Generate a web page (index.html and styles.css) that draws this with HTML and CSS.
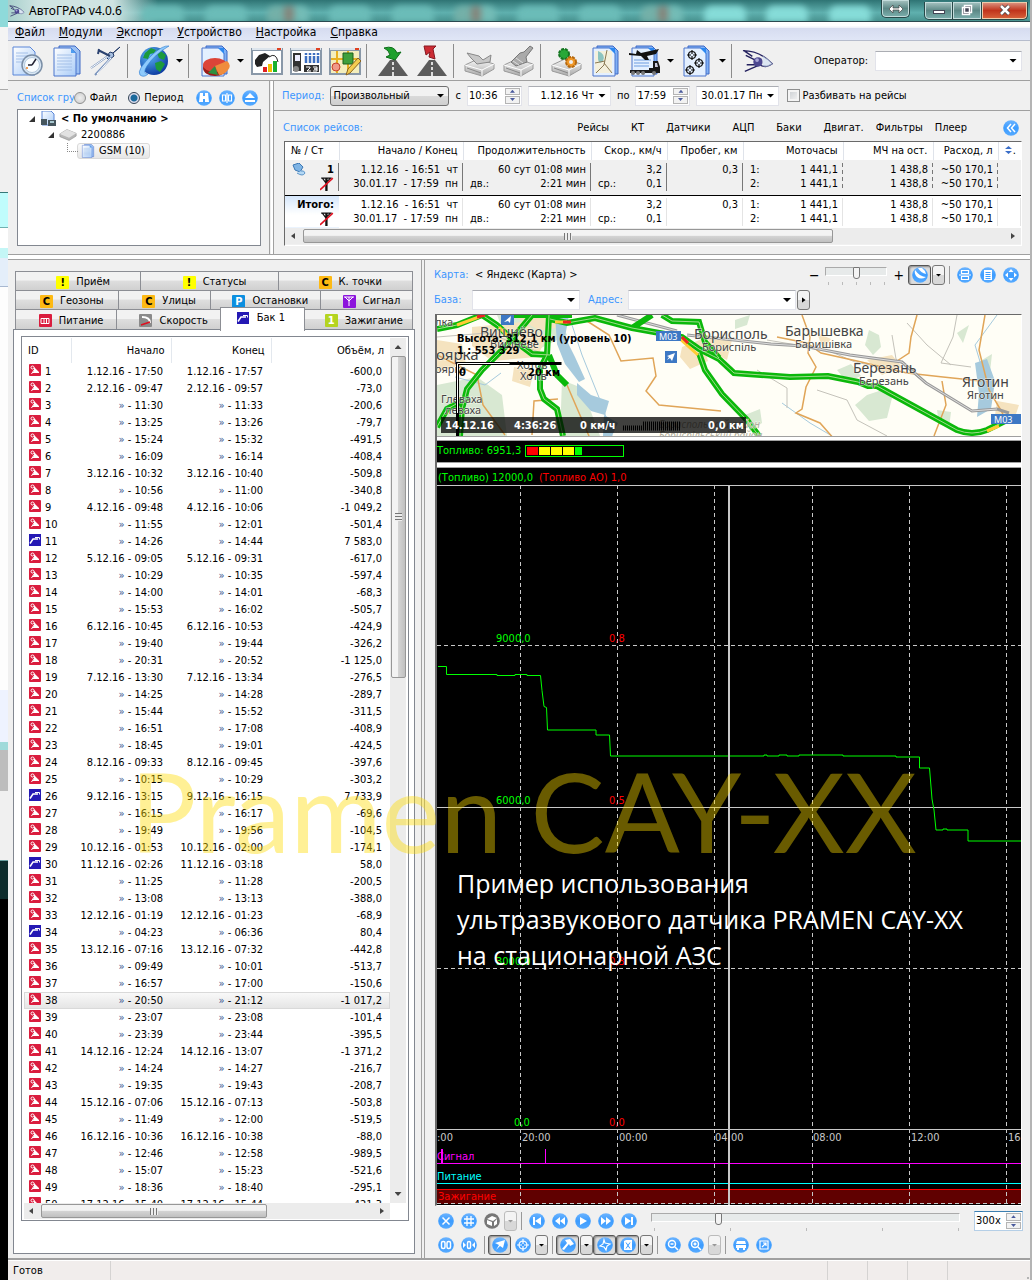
FILE: index.html
```html
<!DOCTYPE html>
<html lang="ru">
<head>
<meta charset="utf-8">
<title>АвтоГРАФ v4.0.6</title>
<link rel="stylesheet" href="styles.css">
</head>
<body>
<svg class="defs" aria-hidden="true">
  <defs>
    <linearGradient id="blue" x1="0" y1="0" x2="0" y2="1"><stop offset="0" stop-color="#6cb4ff"/><stop offset=".5" stop-color="#3c9cff"/><stop offset="1" stop-color="#56aaff"/></linearGradient>
    <linearGradient id="paper" x1="0" y1="0" x2="1" y2="1"><stop offset="0" stop-color="#fff"/><stop offset="1" stop-color="#a9ccf8"/></linearGradient>
    <radialGradient id="earth" cx=".35" cy=".3" r=".8"><stop offset="0" stop-color="#5ab4f4"/><stop offset="1" stop-color="#06319a"/></radialGradient>
    <linearGradient id="metal" x1="0" y1="0" x2="0" y2="1"><stop offset="0" stop-color="#fafafa"/><stop offset="1" stop-color="#a8a8a8"/></linearGradient>
    <symbol id="sheets" viewBox="0 0 32 32"><path d="M8 1h16l5 5v23H8z" fill="#9cc0f2" stroke="#3f68c4"/><path d="M3 3h17l5 5v23H3z" fill="url(#paper)" stroke="#4a74cc"/><path d="M20 3l5 5h-5z" fill="#4f9df0"/><path d="M6 10h15M6 13h15M6 16h15M6 19h15M6 22h15M6 25h15" stroke="#a4c0e8"/></symbol>
    <symbol id="chart-page" viewBox="0 0 32 32"><path d="M7 1h16l5 5v23H7z" fill="#7fb0f4" stroke="#3f68c4"/><path d="M3 3h17l5 5v23H3z" fill="#e4f0ff" stroke="#4a74cc"/><path d="M19 3l6 6v-6z" fill="#2d88f0"/></symbol>
    <symbol id="device" viewBox="0 0 32 32"><path d="M1 20l13-6 16 5v5l-12 7-17-5z" fill="url(#metal)" stroke="#9a9a9a"/><path d="M1 20l17 5 12-6M18 25v6" fill="none" stroke="#fff"/><path d="M3 23l14 5" stroke="#888"/></symbol>
    <symbol id="road" viewBox="0 0 32 32"><path d="M13 15h6l12 16H1z" fill="#5c5c5c"/><path d="M16 17v3M16 22v3M16 27v4" stroke="#ddd" stroke-width="2"/></symbol>
    <symbol id="logo" viewBox="0 0 34 26"><path d="M1 2q18 0 31 14-6 5-13 1M4 7l14 7M5 17h12M3 24l14-6M2 2l9 6" fill="none" stroke="#23205e" stroke-width="1.5"/><circle cx="17" cy="14" r="5" fill="#4c4790"/><circle cx="16" cy="12" r="2" fill="#a9a6d8"/><path d="M22 8q7 4 10 8-6 4-10 2" fill="#dce6f2" stroke="#8f9cc0"/></symbol>
    <symbol id="leak" viewBox="0 0 12 12"><rect width="12" height="12" rx="1" fill="#da1d3e"/><circle cx="3.5" cy="3.500" r="1.500" fill="none" stroke="#fff"/><path d="M5 5V3l5 5v1H3l2-2z" fill="#fff"/><path d="M2.500 10L5 6" stroke="#fff"/></symbol>
    <symbol id="fill" viewBox="0 0 12 12"><rect width="12" height="12" fill="#2519b4"/><path d="M1 9.500l3-4.500h5" fill="none" stroke="#fff" stroke-width="1.500"/><path d="M6 3.500h4.500v2" fill="none" stroke="#fff"/></symbol>
    <symbol id="antenna" viewBox="0 0 12 12"><path d="M1 1h9M2 1l3 4 4-4M5 1v11M6 1v11" fill="none" stroke="#111"/><path d="M0 11L11 1" stroke="#e01020" stroke-width="1.300"/></symbol>
  </defs>
</svg>

<div class="desktop">
<div class="behind"></div>
<div class="window">
  <header class="title">
    <svg class="title-logo" viewBox="0 0 34 26"><use href="#logo"/></svg>
    <h1>АвтоГРАФ v4.0.6</h1>
    <div class="glass"><i></i><i></i><i></i><i></i><i></i><i></i><i></i><i></i><i></i><i></i><i></i><i></i></div>
    <button class="cap" aria-label="Перенести"><svg viewBox="0 0 16 10" width="16" height="10"><path d="M1 5l4-4v3h6V1l4 4-4 4V6H5v3z" fill="#fff" stroke="#444" stroke-width=".7"/></svg></button>
    <div class="caps"><button class="cap" aria-label="Свернуть"><svg viewBox="0 0 12 12" width="12" height="12"><rect x=".5" y="6.500" width="11" height="3" fill="#fff" stroke="#445"/></svg></button><button class="cap" aria-label="Развернуть"><svg viewBox="0 0 12 12" width="12" height="12"><path d="M3.500 1.500h7v7h-7zM1.500 3.500h7v7h-7z" fill="#445" stroke="#fff" stroke-width="1.500"/></svg></button><button class="cap close" aria-label="Закрыть"><svg viewBox="0 0 12 12" width="12" height="12"><path d="M2 2l8 8M10 2l-8 8" stroke="#444" stroke-width="4"/><path d="M2 2l8 8M10 2l-8 8" stroke="#fff" stroke-width="2.500"/></svg></button></div>
  </header>

  <nav class="menu">
    <a href="#"><u>Ф</u>айл</a><a href="#"><u>М</u>одули</a><a href="#"><u>Э</u>кспорт</a><a href="#"><u>У</u>стройство</a><a href="#"><u>Н</u>астройка</a><a href="#"><u>С</u>правка</a>
  </nav>

  <div class="toolbar">
    <button aria-label="Отчёт за период"><svg viewBox="0 0 32 32"><path d="M1 2h17l5 5v23H1z" fill="url(#paper)" stroke="#5a86d8"/><path d="M4 8h12M4 11h14M4 14h10M4 17h8" stroke="#a4c0e8"/><circle cx="20" cy="20" r="10" fill="#d8e6f4" stroke="#7a8ea6" stroke-width="1.500"/><circle cx="20" cy="20" r="7.500" fill="#f8fcff" stroke="#b4c8dc"/><path d="M20 20l4-6M20 20h-4" stroke="#223" stroke-width="1.500"/><circle cx="15" cy="23" r="1" fill="#f08020"/></svg></button>
    <button aria-label="Отчёты"><svg><use href="#sheets"/></svg></button>
    <button aria-label="Измерение"><svg viewBox="0 0 32 32"><path d="M30 2l-7 6-3-1-4 5 3 3 5-4-1-3z" fill="#a8c0e0" stroke="#223a68"/><path d="M18 11L1 23M21 13L5 30" stroke="#7892bc" stroke-width="2"/><path d="M18 11L1 23M21 13L7 29" stroke="#fff"/><path d="M8 5l12 6M9 4l-1 5" stroke="#2b4270" stroke-width="2"/></svg></button>
    <span class="sep"></span>
    <button aria-label="Карта"><svg viewBox="0 0 32 32"><circle cx="16" cy="16" r="14" fill="url(#earth)"/><path d="M7 8l6-5 5 2-2 3-4 1-2 5-5-1zM20 4l8 6-2 5-5-2-2-5zM17 18l6-2 4 3-5 8-4-3z" fill="#1c9a3c"/><path d="M31 1q-6-1-16 8Q-2 25 2 30q4 3 8-1Q4 29 9 21 17 9 31 1" fill="#8ecafc" stroke="#2b7ad0" stroke-width=".6"/></svg></button><button class="drop" aria-label="Ещё"></button>
    <span class="sep"></span>
    <button aria-label="Диаграммы"><svg viewBox="0 0 32 32"><use href="#chart-page"/><ellipse cx="16" cy="23" rx="12" ry="8" fill="#9a1c18"/><ellipse cx="16" cy="20" rx="12" ry="7" fill="#dc4438"/><path d="M16 21l12-5q5 4 1 9-4 5-9 5z" fill="#f08c3c"/><path d="M16 21l3 9-10-2z" fill="#2e9040"/></svg></button><button class="drop" aria-label="Ещё"></button>
    <button aria-label="Топливо"><svg viewBox="0 0 32 32"><path d="M0 3h32v27H0z" fill="#8998a8"/><path d="M2 6h28v22H2z" fill="#fff"/><path d="M1 4h30" stroke="#dce4ec" stroke-width="2"/><path d="M26 4h4" stroke="#e04020" stroke-width="2"/><path d="M4 15l4-5 6-2 5 3-7 6-1 4-5 1-2-3z" fill="#222"/><path d="M18 12q7-5 9 5" fill="none" stroke="#222"/><path d="M12 22h4v5h-4z" fill="#e02020"/><path d="M17 19h4v8h-4z" fill="#f0c000"/><path d="M22 16h4v11h-4z" fill="#18b030"/></svg></button>
    <button aria-label="Пассажиры"><svg viewBox="0 0 32 32"><path d="M0 3h32v27H0z" fill="#8998a8"/><path d="M2 6h28v22H2z" fill="#fff"/><path d="M1 4h30" stroke="#dce4ec" stroke-width="2"/><path d="M26 4h4" stroke="#e04020" stroke-width="2"/><path d="M3 8h8v18H3z" fill="#333"/><path d="M5 10h5v6H5z" fill="#eef"/><circle cx="6" cy="24" r="3" fill="#888"/><path d="M16 8v10M20 8v10M24 8v10M28 8v10" stroke="#3d6fc0" stroke-width="2.500" stroke-dasharray="2 1 7"/><path d="M14 20h15v7H14z" fill="#333"/><path d="M16 22h4v1l-3 3h4M23 22h4v2h-3 3v2h-4" fill="none" stroke="#fff"/></svg></button>
    <button aria-label="Редактор зон"><svg viewBox="0 0 32 32"><path d="M0 3h32v27H0z" fill="#8998a8"/><path d="M2 6h28v22H2z" fill="#f4eebc"/><path d="M1 4h30" stroke="#dce4ec" stroke-width="2"/><path d="M26 4h4" stroke="#e04020" stroke-width="2"/><path d="M8 6v22M2 14h28M19 6v22" stroke="#e8b020" stroke-width="2"/><path d="M14 8h10v11H14z" fill="#3fa03c" stroke="#1d601c"/><circle cx="7" cy="22" r="4" fill="#f09a88" stroke="#c8402c"/><path d="M17 30l2-6L29 13l3 3-11 12z" fill="#f4cc50" stroke="#8a6420"/></svg></button>
    <span class="sep"></span>
    <button aria-label="Загрузить данные"><svg viewBox="0 0 32 32"><use href="#road"/><path d="M7 3q10-3 13 5l4-1-6 8-9-3 4-2Q12 5 7 3z" fill="#1da02c" stroke="#0c6c18"/></svg></button>
    <button aria-label="Выгрузить данные"><svg viewBox="0 0 32 32"><use href="#road"/><path d="M8 1h12l-3 3 2 10-6-2 1-5-4 3z" fill="#cc2c34" stroke="#861820"/></svg></button>
    <span class="sep"></span>
    <button aria-label="Чтение прибора"><svg viewBox="0 0 32 32"><use href="#device"/><path d="M3 8l12 3 4 4 8-5-1 7-13 2-6-6z" fill="#c8c8c8" stroke="#888"/></svg></button>
    <button aria-label="Очистка прибора"><svg viewBox="0 0 32 32"><use href="#device"/><path d="M27 1l3 2-7 9 1 5-11 4-5-4 9-9 4-1z" fill="#aaa" stroke="#777"/><path d="M13 13l7 5M10 16l6 4" stroke="#ddd"/></svg></button>
    <span class="sep"></span>
    <button aria-label="Настройка прибора"><svg viewBox="0 0 32 32"><use href="#device"/><circle cx="13" cy="9" r="5" fill="#28a838" stroke="#147420" stroke-width="2" stroke-dasharray="3 1"/><circle cx="20" cy="17" r="5" fill="#f09828" stroke="#b46810" stroke-width="2" stroke-dasharray="3 1"/><circle cx="20" cy="17" r="2" fill="#eee"/></svg></button>
    <button aria-label="Отчёт с картой"><svg viewBox="0 0 32 32"><use href="#chart-page"/><path d="M5 6h17v22H5z" fill="#f4f0dc"/><path d="M8 6q8 3 5 10-4 4-5-2z" fill="#8cc4c0"/><path d="M17 5l-3 15-8 8M14 18l8 10M5 18l10-2" fill="none" stroke="#8a7a54"/></svg></button>
    <button aria-label="Отчёт по технике"><svg viewBox="0 0 32 32"><use href="#chart-page"/><path d="M5 15h17M5 18h15M5 21h15" stroke="#6c9ce0"/><path d="M0 8l7 1 1-4 4 3 18-4-3 5-9 2 2 4h-4l-4-4-12-1z" fill="#111"/><path d="M1 25h19v-2h4v-7h5l2 6v6H1z" fill="#181818"/><path d="M26 18h2l1 4h-3z" fill="#ccd"/><path d="M4 28h.1M9 28h.1M14 28h.1M25 28h.1" stroke="#777" stroke-width="4" stroke-linecap="round"/></svg></button><button class="drop" aria-label="Ещё"></button>
    <button aria-label="Отчёт по точкам"><svg viewBox="0 0 32 32"><use href="#chart-page"/><g fill="none" stroke="#111" stroke-width="1.200"><circle cx="11" cy="10" r="3.500"/><path d="M11 5v4M11 11v4M6 10h4M12 10h4"/><circle cx="18" cy="18" r="3.500"/><path d="M18 13v4M18 19v4M13 18h4M19 18h4"/><circle cx="9" cy="25" r="3.500"/><path d="M9 20v4M9 26v4M4 25h4M10 25h4"/></g></svg></button><button class="drop" aria-label="Ещё"></button>
    <span class="sep"></span>
    <button class="wide" aria-label="О программе"><svg><use href="#logo"/></svg></button>
    <label class="operator">Оператор: <span class="combo"><select><option></option></select></span></label>
  </div>

  <div class="top">
    <section class="groups">
      <div class="groups-head">
        <span class="cap-blue">Список групп</span>
        <label><input type="radio" name="src"> Файл</label>
        <label class="r2"><input type="radio" name="src" checked> Период</label>
        <button class="ic" data-i="find" aria-label="Найти"></button><button class="ic" data-i="cols" aria-label="Столбцы"></button><button class="ic" data-i="eject" aria-label="Свернуть список"></button>
      </div>
      <ul class="tree">
        <li><span class="exp"></span><svg width="17" height="16" viewBox="0 0 17 16"><path d="M2 0h9l3 3v11H2z" fill="url(#paper)" stroke="#5a86d8"/><path d="M1 8h6v6H1zM8 9h8v6H8z" fill="#46565e"/><path d="M10 10h4v2h-4z" fill="#a8c8d0"/></svg><b>&lt; По умолчанию &gt;</b></li>
        <li class="l2"><span class="exp"></span><svg width="18" height="12" viewBox="0 0 32 22"><path d="M1 9l13-8 17 7v5l-13 8L1 14z" fill="#b8b8b8" stroke="#8a8a8a"/><path d="M1 9l13-8 17 7-13 8z" fill="#e2e2e2"/></svg><span>2200886</span></li>
        <li class="l3"><span class="sel"><svg width="14" height="14"><use href="#sheets"/></svg><span>GSM (10)</span></span></li>
      </ul>
    </section>
    <section class="trips">
      <div class="period">
        <span class="cap-blue">Период:</span>
        <span class="combo raised w119"><select aria-label="Период"><option>Произвольный</option></select></span>
        <span>с</span>
        <span class="spin"><input type="text" value="10:36" aria-label="Время начала"><span><button aria-label="Больше"></button><button aria-label="Меньше"></button></span></span>
        <span class="combo w83"><select aria-label="Дата начала"><option>1.12.16 Чт</option></select></span>
        <span>по</span>
        <span class="spin"><input type="text" value="17:59" aria-label="Время конца"><span><button aria-label="Больше"></button><button aria-label="Меньше"></button></span></span>
        <span class="combo w83"><select aria-label="Дата конца"><option>30.01.17 Пн</option></select></span>
        <label class="split"><input type="checkbox"> Разбивать на рейсы</label>
      </div>
      <div class="trips-head">
        <span class="cap-blue">Список рейсов:</span>
        <nav><a href="#">Рейсы</a><a href="#">КТ</a><a href="#">Датчики</a><a href="#">АЦП</a><a href="#">Баки</a><a href="#">Двигат.</a><a href="#">Фильтры</a><a href="#">Плеер</a></nav>
        <button class="ic" data-i="left" aria-label="Свернуть"></button>
      </div>
      <div class="trip-box">
        <table class="trip-table">
          <colgroup><col class="c54"><col class="c124"><col class="c128"><col class="c76"><col class="c76"><col class="c100"><col class="c90"><col class="c65"><col></colgroup>
          <thead><tr><th>№ / Ст</th><th>Начало / Конец</th><th>Продолжительность</th><th>Скор., км/ч</th><th>Пробег, км</th><th>Моточасы</th><th>МЧ на ост.</th><th>Расход, л</th><th class="last"><svg width="7" height="8" viewBox="0 0 7 8"><path d="M0 3l3.500-3L7 3zM0 5l3.500 3L7 5z" fill="#3b6ec8"/></svg><span>.</span></th></tr></thead>
          <tbody></tbody>
        </table>
        <div class="hbar"><i class="al"></i><span class="thumb"></span><i class="ar"></i></div>
      </div>
    </section>
  </div>

  <div class="main">
    <section class="left">
      <div class="tabs">
        <div><button class="g125"><i class="y">!</i>Приём</button><button class="g138"><i class="y">!</i>Статусы</button><button class="g135"><i class="o">C</i>К. точки</button></div>
        <div><button class="g103"><i class="o">C</i>Геозоны</button><button class="g91"><i class="o">C</i>Улицы</button><button class="g112"><i class="p">P</i>Остановки</button><button class="g91"><i class="v"><svg viewBox="0 0 12 12"><path d="M1 2h10M2 2l4 4 4-4M6 2v9" fill="none" stroke="#fff"/></svg></i>Сигнал</button></div>
        <div><button class="g100"><i class="r"><svg viewBox="0 0 12 12"><path d="M2 3.500h8v5H2zM5 3v6M7.500 3v6" fill="none" stroke="#fff"/></svg></i>Питание</button><button class="g103"><i class="s"><svg viewBox="0 0 12 12"><path d="M2 2q8 0 8 6" fill="none" stroke="#fff" stroke-width="2"/><path d="M1 10l9-3" stroke="#e01020" stroke-width="1.500"/></svg></i>Скорость</button><button class="g88 on"><i><svg><use href="#fill"/></svg></i>Бак 1</button><button class="g107"><i class="n">1</i>Зажигание</button></div>
      </div>
      <div class="panel">
        <div class="list">
          <div class="list-body">
            <div class="rows">
              <table class="tank">
                <colgroup><col class="c47"><col class="c100"><col class="c100"><col></colgroup>
                <thead><tr><th>ID</th><th>Начало</th><th>Конец</th><th>Объём, л</th></tr></thead>
                <tbody></tbody>
              </table>
            </div>
            <div class="vbar"><i class="au"></i><span class="thumb"></span><i class="ad"></i></div>
          </div>
          <div class="hbar"><i class="al"></i><span class="thumb"></span><i class="ar"></i></div>
        </div>
      </div>
    </section>

    <section class="right">
      <div class="map-bar">
        <span class="cap-blue">Карта:</span><span>&lt; Яндекс (Карта) &gt;</span>
        <span class="zoomer">−<span class="slide"><input type="range" aria-label="Масштаб карты"></span>+</span>
        <button class="ic press" data-i="earth" aria-label="Слой"></button><button class="dd" aria-label="Ещё"></button><span class="vsep"></span>
        <button class="ic" data-i="fit" aria-label="Вписать"></button><button class="ic" data-i="page" aria-label="Журнал"></button><button class="ic" data-i="move" aria-label="На весь экран"></button>
      </div>
      <div class="map-bar second">
        <label class="cap-blue" for="base">База:</label><span class="combo w108"><select id="base"><option></option></select></span>
        <label class="cap-blue adr" for="adr">Адрес:</label><span class="combo w168"><select id="adr"><option></option></select></span><button class="dd go" aria-label="Найти"></button>
      </div>
      <div class="screen">
        <svg class="map" viewBox="0 0 584 121" preserveAspectRatio="xMinYMin slice">
          <rect width="584" height="121" fill="#fffef6"/>
          <g fill="#d8e8d2"><path d="M0 70l40-8 25 18 5 41H0zM60 0h60l10 20-30 15-30-10zM125 65l20 8 18 48h-40zM298 5l15-5-3 10-12 4zM432 15l10 5 2 12-8 8-8-10zM430 80l15-5 10 8-5 20-18 3-14-16zM520 18l12-8-6 18zM400 55l14-6 10 12-14 6zM545 45l10-6-2 18zM308 100l15-6 2 14-12 8zM500 95l14 2-2 16-10-4z"/></g>
          <g fill="#f5e3bf"><path d="M35 12l50-5 25 15-10 20-45 4-20-15zM0 25l25 4 4 20-29 8zM75 0h50l8 10-30 6zM245 32l20-8 6 22-18 8-10-12zM270 22l25 3-5 20-12-6zM430 45l25-5 10 12-20 8zM380 18l14 6-8 10zM560 86l22 4-4 12-20-2zM77 52l20 4-4 16-18-6z"/></g>
          <g fill="#a6cadd"><path d="M118 0l14 0-4 22 10 20 10 22-6 3-14-18-8-20zM140 68l14 12 18 6-4 14-14-4-14-16zM167 100l14 8-6 13h-9zM538 48l12-4 8 22-4 28-14 8 2-24z"/></g>
          <g fill="none" stroke="#a6cadd"><path d="M135 10l10 30 20 50 10 31M18 62l30 8 16-12M345 88l28 20 22 13M560 0l-22 30 6 20"/></g>
          <g fill="none" stroke="#c4c2ba"><path d="M0 22l50-4 60 22M330 25l60 10 28 12 40 8M320 55l30 18 0 20M470 8l20 22 24 20M520 0l-4 22-12 26 30 4M380 75l30 10 10 20 30 16M455 20l4 24 24 20"/></g>
          <g fill="none" stroke="#e0a558" stroke-width="1.500"><path d="M150 6l22 14 12 26 32-3 3 18-10 15 13 14 62 6M0 40l40 20 6 30 22 30M130 70l22 51M95 120l2-34 24-2M365 0l8 22-2 16 8 14-10 20-4 22-6 4 24 10 15 17M480 0l-6 22-2 16-12 8M340 22l30 6 14 10 36 8 50 12 36 4 38 4M505 66l4 24-12 31M548 0l-6 35 10 40 14 24"/></g>
          <g fill="none" stroke="#999" stroke-width="3"><path d="M180 0l60 16M250 20l84 9 32 2 47 9 52 7 24 21 46 28 25-2 12 4"/></g>
          <path d="M180 0l60 16M250 20l84 9 32 2 47 9 52 7 24 21 46 28 25-2" fill="none" stroke="#ddd"/>
          <path d="M0 14l20-4L45 0M45 0l15 10 15 14 20 15 18 1M113 4l17 4 28-5 37 10 50 9 17 12 20 10 15 14 56 4 38-1 30 6 10 4 9 0 80 44q15 6 30 0l24-12M262 38l6 17 17 24 25 26 12 16M225 0l10 6 27 1 6 20 14 16M215 0l-20 13M112 0l-2 40-7 14v20l4 10 13 10 6 27M95 0L70 30 45 55 30 74l-5 20-2 27M0 112l10-18 22-12M112 40l8 20 10 10M75 0l60 0" fill="none" stroke="#0bb80b" stroke-width="6"/>
          <path d="M0 14l20-4L45 0M45 0l15 10 15 14 20 15 18 1M113 4l17 4 28-5 37 10 50 9 17 12 20 10 15 14 56 4 38-1 30 6 10 4 9 0 80 44q15 6 30 0l24-12M262 38l6 17 17 24 25 26 12 16M225 0l10 6 27 1 6 20 14 16M112 0l-2 40-7 14v20l4 10 13 10 6 27M95 0L70 30 45 55 30 74l-5 20-2 27M0 112l10-18 22-12" fill="none" stroke="#9fdc8c"/>
          <path d="M20 10l22-8M118 7h12M243 24l18 16M62 12l8 8M550 116l12-5" stroke="#fc3" stroke-width="3"/><path d="M40 2l8-2M126 7h8M245 22l6 6" stroke="#e22" stroke-width="3"/>
          <g fill="#3d78c4"><rect x="64" y="0" width="13" height="10"/><rect x="228" y="36" width="12" height="12"/><rect x="219" y="16" width="25" height="10"/><rect x="554" y="99" width="30" height="10"/></g>
          <g fill="#fff"><path d="M67 7l7-6-1 7-2-2zM230 41l8-3-3 8-2-3-3 2 2-3z"/></g>
          <g class="place"><text x="222" y="25" class="m">М03</text><text x="557" y="108" class="m">М03</text>
          <text x="43" y="22" class="big">Вишнёво</text><text x="53" y="33">Вишневе</text><text x="-1" y="45" class="mid">оярка</text><text x="-2" y="58">оярка</text><text x="80" y="54">Хотов</text><text x="83" y="65">Хотів</text><text x="4" y="88">Глеваха</text><text x="8" y="99">леваха</text><text x="-2" y="11">лка</text>
          <text x="257" y="24" class="big">Борисполь</text><text x="265" y="36">Бориспіль</text><text x="348" y="21" class="big">Барышевка</text><text x="358" y="33">Баришівка</text><text x="416" y="58" class="big">Березань</text><text x="422" y="70">Березань</text><text x="525" y="72" class="big">Яготин</text><text x="530" y="84">Яготин</text>
          <text x="222" y="113" class="dim">Бориспольский район</text><text x="222" y="124" class="dim">Бориспільський район</text></g>
          <path d="M20.500 121V48.500h104" fill="none" stroke="#000" stroke-width="3"/><path d="M20.500 98V48.500h52" fill="none" stroke="#fff"/>
          <g class="hud"><text x="20" y="27">Высота: 312,1 км (уровень 10)</text><text x="20" y="39">1 : 553 329</text><text x="22" y="61">0</text><text x="91" y="61">20 км</text></g>
          <rect x="4" y="102" width="305" height="16" fill="#000" fill-opacity=".75"/>
          <path d="M186 113h58" stroke="#000" stroke-width="5" stroke-dasharray="1 1"/><path d="M206 110h38" stroke="#000" stroke-width="7" stroke-dasharray="1 1"/>
          <g class="hud w"><text x="8" y="114">14.12.16</text><text x="77" y="114">4:36:26</text><text x="143" y="114">0 км/ч</text><text x="271" y="114">0,0 км</text></g>
        </svg>
        <div class="split-h"></div>
        <div class="fuel"><span>Топливо: 6951,3</span><span class="gauge"><i class="gr"></i><i></i><i></i><i></i><i class="gg"></i></span></div>
        <div class="split-h"></div>
        <svg class="chart" viewBox="0 0 584 737" preserveAspectRatio="xMinYMin slice">
          <rect width="584" height="737" fill="#000"/>
          <rect y="721" width="584" height="15" fill="#600000"/>
          <g stroke="#c8c8c8" stroke-dasharray="4 3"><path d="M83.500 17v720M180.500 17v720M277.500 17v720M375.500 17v720M472.500 17v720M569.500 17v720M0 177.500h584M0 500.500h584M0 735.500h584"/></g>
          <g stroke="#c8c8c8"><path d="M0 17.500h584M0 339.500h584M0 661.500h584"/></g>
          <path d="M0 695.500h584" stroke="#f0f"/><path d="M5 681v14" stroke="#f0f" stroke-width="2"/><path d="M108.500 681v14" stroke="#f0f"/>
          <path d="M0 715.500h584" stroke="#0ff"/><path d="M0 721.500h584" stroke="#f00"/>
          <g fill="#0f0"><text x="1" y="13">(Топливо) 12000,0</text><text x="59" y="174">9000,0</text><text x="59" y="336">6000,0</text><text x="59" y="497">3000,0</text><text x="77" y="658">0,0</text></g>
          <g fill="#f00"><text x="102" y="13">(Топливо АО) 1,0</text><text x="172" y="174">0,8</text><text x="172" y="336">0,5</text><text x="172" y="497">0,3</text><text x="172" y="658">0,0</text><text x="1" y="732">Зажигание</text></g>
          <g fill="#c8c8c8"><text x="0" y="673">:00</text><text x="85" y="673">20:00</text><text x="182" y="673">00:00</text><text x="278" y="673">04:00</text><text x="376" y="673">08:00</text><text x="474" y="673">12:00</text><text x="571" y="673">16:00</text></g>
          <text x="0" y="692" fill="#f0f">Сигнал</text><text x="0" y="712" fill="#0ff">Питание</text>
          <path d="M1 198.500h8.500v8H60v1h18v-1h12v1h13.500l1.500 15 2 16 2.500 1 1 22.500H159v5h13.500l1 21H327v-1h3v1h12v-1h8v1h12v-1h44v1h53v1h23.500v11h10l2.500 31 2 11 2 20h7v-1h4v1h21v11H584" fill="none" stroke="#0f0"/>
          <path d="M292 17v720" stroke="#c8c8c8" stroke-width="2"/>
        </svg>
      </div>
      <div class="player">
        <div>
          <button class="ic" data-i="x" aria-label="Сброс"></button><button class="ic" data-i="grid" aria-label="Сетка"></button><button class="ic" data-i="cube" aria-label="Объём"></button><button class="dd off" aria-label="Ещё"></button><span class="vsep"></span>
          <button class="ic" data-i="first" aria-label="В начало"></button><button class="ic" data-i="rew" aria-label="Назад"></button><button class="ic" data-i="play" aria-label="Пуск"></button><button class="ic" data-i="ff" aria-label="Вперёд"></button><button class="ic" data-i="end" aria-label="В конец"></button>
          <span class="slide long"><input type="range" value="21" aria-label="Позиция"></span>
          <span class="spin speed"><input type="text" value="300x" aria-label="Скорость"><span><button aria-label="Больше"></button><button aria-label="Меньше"></button></span></span>
        </div>
        <div>
          <button class="ic" data-i="zz" aria-label="Деления"></button><button class="ic" data-i="zero" aria-label="Ноль"></button><span class="vsep"></span>
          <button class="ic press" data-i="plane" aria-label="Курсор"></button><button class="ic" data-i="aim" aria-label="Центр"></button><button class="dd" aria-label="Ещё"></button><span class="vsep"></span>
          <button class="ic press" data-i="pump" aria-label="Заправки"></button><button class="dd" aria-label="Ещё"></button><button class="ic press" data-i="track" aria-label="Трек"></button><button class="ic press" data-i="tank" aria-label="Баки"></button><button class="dd" aria-label="Ещё"></button><span class="vsep"></span>
          <button class="ic" data-i="zout" aria-label="Уменьшить"></button><button class="ic" data-i="zin" aria-label="Увеличить"></button><button class="dd off" aria-label="Ещё"></button><span class="vsep"></span>
          <button class="ic" data-i="bus" aria-label="Объект"></button><button class="ic" data-i="out" aria-label="Открыть"></button>
        </div>
      </div>
    </section>
    <div class="mark">Pramen CAY-XX</div>
    <p class="note">Пример использования<br>ультразвукового датчика PRAMEN CAY-XX<br>на стационарной АЗС</p>
  </div>

  <footer><span>Готов</span><span></span><span></span><span></span><span></span><span></span></footer>
</div>
</div>
<script src="app.js"></script>
</body>
</html>
```
FILE: styles.css
```css
* { box-sizing: border-box; }
body { margin: 0; background: #f0f0f0; color: #000; font: 11px/14px "DejaVu Sans Condensed", "DejaVu Sans", sans-serif; }
button, input, select { font: inherit; color: inherit; margin: 0; padding: 0; }
button { background: none; border: 0; }
a { color: inherit; text-decoration: none; }
.defs { position: absolute; width: 0; height: 0; }
.desktop { display: flex; min-height: 100vh; overflow: hidden; }
.behind { flex: 0 0 8px; background: linear-gradient(#8edada 0 27px, #f4f4f4 27px 89px, #aaa 89px 90px, #f0f0f0 90px 192px, #367878 192px 193px, #c0fcfc 193px 227px, #70b0b0 227px 228px, #fff 228px 248px, #c4f6f6 248px 258px, #e4eefa 258px 286px, #a8b8d0 286px 287px, #fdfdfd 287px 690px, #eef3ff 690px 742px, #9fdada 742px 750px, #bdbdbd 750px 791px, #f0f0f0 791px 860px, #6aa0a0 860px 861px, #0d2c2c 861px 899px, #000 899px); }
.window { flex: 1; min-width: 0; display: flex; flex-direction: column; background: #f0f0f0; border-right: 2px solid #b4b4b4; }

.title { height: 22px; display: flex; align-items: center; background: linear-gradient(#2f7474, #5fb0ae 60%, #489390); border-bottom: 1px solid #2c4a50; position: relative; overflow: hidden; padding: 0 2px 0 1px; }
.title-logo { width: 16px; height: 14px; margin-right: 4px; z-index: 1; }
.title h1 { margin: 0; font: 12px/20px "Noto Sans", sans-serif; z-index: 1; white-space: nowrap; }
.title::before { content: ""; position: absolute; left: 0; top: 0; width: 150px; height: 22px; background: linear-gradient(90deg, #a8d0cc, #cfe4e2 20% 70%, transparent); }
.glass { flex: 1; display: flex; justify-content: space-around; filter: blur(3px); height: 22px; padding-left: 10px; }
.glass i { width: 42px; margin-top: 6px; background: #6bbcb8; border-radius: 8px 8px 0 0; }
.glass i:nth-child(3n) { background: linear-gradient(90deg, #74b0a8 40%, #84867c 40% 65%, #74bcb6 65%); }
.glass i:nth-child(n+10) { background: #86dcd8; }
.caps { display: flex; margin-left: 14px; }
.cap { height: 18px; width: 29px; align-self: flex-start; display: grid; place-items: center; border: 1px solid #274848; border-top: 0; background: linear-gradient(#a8c4c2, #5c8886 50%, #7cb0ae); box-shadow: inset 0 0 0 1px #c4dcdc; border-radius: 0 0 5px 5px; }
.caps .cap { border-radius: 0; border-left-width: 0; }
.caps .cap:first-child { border-radius: 0 0 0 5px; border-left-width: 1px; }
.caps .close { width: 46px; border-radius: 0 0 5px 0; background: linear-gradient(#dc9a88, #c0341c 50%, #d8643c); box-shadow: inset 0 0 0 1px #eca; }

.menu { height: 19px; display: flex; gap: 14px; padding: 3px 7px 0; font-size: 12px; background: linear-gradient(#fff 0 20%, #e9edf8 35%, #d6dcf0 36%, #e0e6f6); border-bottom: 1px solid #b6bccc; }
.toolbar { height: 40px; display: flex; align-items: center; border-bottom: 1px solid #a0a0a0; }
.toolbar button { width: 39px; height: 36px; display: grid; place-items: center; }
.toolbar button svg { width: 32px; height: 32px; }
.toolbar .wide svg { height: 28px; }
.toolbar .drop { width: 13px; }
.drop::after, .combo::after, .dd::after { content: ""; width: 8px; height: 4px; background: #000; clip-path: polygon(0 0, 100% 0, 50% 100%); }
.sep { width: 9px; height: 34px; background: linear-gradient(#8c8c8c, #8c8c8c) 2px 0 / 1px 100% no-repeat; }
.operator { flex: 1; display: flex; align-items: center; gap: 7px; padding: 0 8px 0 37px; }
.combo { position: relative; display: inline-block; height: 20px; background: #fff; border: 1px solid #e2e3ea; border-top-color: #abadb3; }
.operator .combo { flex: 1; }
.combo select { appearance: none; width: 100%; height: 18px; border: 0; background: none; padding: 0 16px 0 2px; }
.combo::after { position: absolute; right: 4px; top: 7px; pointer-events: none; }
.combo.raised { border: 1px solid #707070; border-radius: 3px; background: linear-gradient(#f2f2f2 50%, #dadada 50%, #cfcfcf); }
.w119 { width: 119px; } .w83 { width: 83px; } .w108 { width: 108px; } .w168 { width: 168px; }
.w83 select { text-align: right; }

.top { height: 179px; display: flex; border-bottom: 1px solid #a0a0a0; box-shadow: inset 0 -4px #fff, inset 0 -5px #a0a0a0; padding-bottom: 5px; }
.cap-blue { color: #3c96ff; white-space: nowrap; }
.groups { width: 262px; border-right: 1px solid #a0a0a0; padding: 5px 8px 8px 9px; display: flex; flex-direction: column; }
.groups-head { height: 23px; display: flex; align-items: center; }
.groups-head .cap-blue { width: 57px; overflow: hidden; }
.groups-head label { display: flex; align-items: center; gap: 4px; width: 55px; }
.groups-head .r2 { width: 64px; }
input[type=radio] { appearance: none; width: 12px; height: 12px; border: 1px solid #8e8f8f; border-radius: 50%; background: radial-gradient(#eee, #ccc); }
input[type=radio]:checked { background: radial-gradient(#1c6a9c 0 3px, #dde 4px); border-color: #345; }
input[type=checkbox] { appearance: none; width: 13px; height: 13px; border: 1px solid #8e8f8f; background: linear-gradient(135deg, #c8ccd0, #f6f6f6); box-shadow: inset 0 0 0 2px #f4f4f4; }
.ic { width: 23px; height: 23px; display: grid; place-items: center; flex: none; }
.ic svg { width: 16px; height: 16px; }
.tree { flex: 1; margin: 0; padding: 1px 0 0 8px; background: #fff; border: 1px solid #828790; list-style: none; }
.tree li { height: 16px; display: flex; align-items: center; gap: 4px; }
.tree .l2 { padding-left: 19px; }
.tree .l3 { padding-left: 42px; position: relative; }
.tree .l3::before { content: ""; position: absolute; left: 41px; top: 0; width: 10px; height: 8px; border: dotted #888; border-width: 0 0 1px 1px; }
.tree .sel { margin-left: 9px; display: flex; align-items: center; gap: 4px; border: 1px solid #d9d9d9; border-radius: 3px; background: linear-gradient(#fafafa, #e6e6e6); padding: 0 4px 0 3px; height: 16px; }
.exp { width: 6px; height: 6px; background: #333; clip-path: polygon(100% 0, 100% 100%, 0 100%); margin: 0 1px 0 3px; }

.trips { flex: 1; min-width: 0; border-left: 1px solid #a0a0a0; margin-left: 3px; box-shadow: -2px 0 #fff; display: flex; flex-direction: column; }
.period { height: 30px; display: flex; align-items: center; gap: 6px; padding: 0 9px 0 8px; border-bottom: 1px solid #a0a0a0; white-space: nowrap; }
.split { display: flex; align-items: center; gap: 2px; margin-left: 2px; }
.spin { display: flex; width: 55px; height: 20px; background: #fff; border: 1px solid #e2e3ea; border-top-color: #abadb3; padding: 1px; }
.spin input { flex: 1; min-width: 0; border: 0; background: none; }
.spin > span { display: flex; flex-direction: column; width: 15px; gap: 1px; }
.spin button { flex: 1; display: grid; place-items: center; border: 1px solid #b4b4b4; background: #f2f2f2; }
.spin button::after { content: ""; width: 5px; height: 3px; background: #4a5a9c; clip-path: polygon(50% 0, 100% 100%, 0 100%); }
.spin button:last-child::after { transform: rotate(180deg); }
.trips-head { height: 30px; display: flex; align-items: center; padding: 4px 8px 0 9px; }
.trips-head nav { flex: 1; display: flex; justify-content: flex-end; gap: 22px; padding-right: 32px; }
.trips-head nav a:nth-child(n+7) { margin-left: -10px; }
.trip-box { flex: 1; margin: 0 8px 8px; margin-left: 10px; border: 1px solid #fff; border-top-color: #696969; border-left-color: #696969; overflow: hidden; }
table { border-collapse: collapse; table-layout: fixed; width: 100%; }
th { font-weight: normal; }
th, td { padding: 0; white-space: nowrap; overflow: hidden; }
.c54 { width: 54px; } .c124 { width: 124px; } .c128 { width: 128px; } .c76 { width: 76px; } .c100 { width: 100px; } .c90 { width: 90px; } .c65 { width: 65px; } .c47 { width: 47px; }
.trip-table th { height: 18px; background: #fff; border-right: 1px solid #dfe3ea; text-align: right; padding-right: 5px; }
.trip-table th:first-child { text-align: left; padding-left: 6px; }
.trip-table .last { border: 0; text-align: left; padding-left: 6px; }
.trip-table .last span { float: right; }
.trip-table td { height: 35px; padding: 0 5px 0 7px; background: linear-gradient(#777, #777) 100% 50% / 1px 28px no-repeat; }
.trip-table td:nth-child(n+6) { background: repeating-linear-gradient(#777 0 4px, transparent 4px 7px) 100% 50% / 1px 28px no-repeat; }
.trip-table td:last-child { background: none; }
.trip-table .sum td { height: 33px; padding-top: 1px; background: linear-gradient(#e4e4e4, #e4e4e4) 100% 50% / 1px 28px no-repeat; }
.trip-table .sum { background: #fff; border-top: 1px solid #000; }
.trip-table .sum td:first-child { background: linear-gradient(#d4e6fb, #fff 60%); }
.ln { display: flex; justify-content: space-between; height: 14px; }
.ln > :only-child { margin-left: auto; }
.ln svg { width: 14px; height: 14px; }

.hbar { height: 16px; display: flex; align-items: center; background: #ececec; padding: 0 6px; }
.hbar .thumb { display: grid; place-items: center; height: 14px; width: 530px; margin-left: 8px; margin-right: auto; border: 1px solid #979797; border-radius: 2px; background: linear-gradient(#f3f3f3 45%, #d4d4d4 50%, #c0c0c0); }
.thumb::after { content: ""; width: 8px; height: 7px; background: repeating-linear-gradient(90deg, #777 0 1px, #eee 1px 3px); }
.hbar i, .vbar i { width: 4px; height: 6px; background: #444; }
.al { clip-path: polygon(0 50%, 100% 0, 100% 100%); }
.ar { clip-path: polygon(100% 50%, 0 0, 0 100%); }

.main { position: relative; flex: 1; display: flex; border-bottom: 2px solid #a0a0a0; }
.left { width: 414px; padding: 10px 6px 4px 5px; border-right: 1px solid #a0a0a0; display: flex; flex-direction: column; }
.tabs { padding: 0 2px; margin-top: 1px; }
.tabs > div { display: flex; height: 19px; }
.tabs > div:last-child { height: 20px; }
.tabs button { display: flex; justify-content: center; align-items: center; gap: 7px; border: 1px solid #8c8e94; margin-left: -1px; border-bottom-width: 0; background: linear-gradient(#f2f2f2 45%, #dedede 50%, #d0d0d0); min-width: 0; padding: 2px 0 0 10px; }
.tabs button:first-child { margin-left: 0; }
.tabs button.on { background: #fff; margin-top: -2px; height: 24px; z-index: 1; padding: 0 4px 3px 0; }
.tabs i { width: 13px; height: 13px; flex: none; display: grid; place-items: center; font: bold 11px/13px "DejaVu Sans Condensed", sans-serif; border-radius: 1px; }
.tabs i svg { width: 12px; height: 12px; }
.y { background: #ff0; } .o { background: #fdb913; } .p { background: #0c8fe0; color: #fff; } .v { background: #8c14dc; } .r { background: #da1d3e; } .s { background: #8a8a8a; } .n { background: #b4d420; color: #fff; }
.g125 { flex: 125; } .g138 { flex: 138; } .g135 { flex: 135; } .g103 { flex: 103; } .g91 { flex: 91; } .g112 { flex: 112; } .g100 { flex: 100; } .g88 { flex: 88; } .g107 { flex: 107; }
.panel { flex: 1; background: #fff; border: 1px solid #828790; padding: 6px 5px 32px 7px; display: flex; }
.list { flex: 1; display: flex; flex-direction: column; border: 1px solid #828790; padding: 1px 2px; }
.list-body { flex: 1; display: flex; }
.rows { flex: 1; height: 865px; overflow: hidden; }
.tank th { height: 25px; text-align: right; padding-right: 6px; border-right: 1px solid #e3e8ee; }
.tank th:first-child { text-align: left; padding-left: 4px; }
.tank td { height: 17px; text-align: right; padding-right: 8px; }
.tank th:nth-child(4) { border: 0; }
.tank td:first-child { text-align: left; padding-left: 5px; }
.tank td svg { width: 12px; height: 12px; vertical-align: -1px; margin-right: 4px; }
.tank .cur { background: linear-gradient(#fafafa, #e4e4e4); box-shadow: inset 0 0 0 1px #d9d9d9; }
.tank em { font-style: normal; color: #3a5490; }
.vbar { width: 16px; background: #ececec; display: flex; flex-direction: column; align-items: center; padding: 7px 0; }
.vbar i { width: 7px; height: 4px; }
.au { clip-path: polygon(50% 0, 100% 100%, 0 100%); }
.ad { clip-path: polygon(50% 100%, 100% 0, 0 0); }
.vbar .thumb { display: grid; place-items: center; width: 15px; height: 322px; margin: 7px 0 auto; border: 1px solid #979797; border-radius: 2px; background: linear-gradient(90deg, #f3f3f3 45%, #d4d4d4 50%, #c0c0c0); }
.vbar .thumb::after { width: 7px; height: 8px; background: repeating-linear-gradient(#777 0 1px, #eee 1px 3px); }
.list .hbar { margin-right: 16px; padding-left: 5px; }
.list .thumb { max-width: 226px; }

.right { flex: 1; min-width: 0; border-left: 1px solid #a0a0a0; margin-left: 2px; padding: 2px 8px 0 10px; display: flex; flex-direction: column; }
.map-bar { height: 26px; display: flex; align-items: center; white-space: nowrap; }
.second { padding-bottom: 2px; }
.map-bar > .cap-blue { width: 41px; flex: none; margin-left: -1px; }
.zoomer { margin-left: auto; display: flex; gap: 6px; align-items: center; font-size: 14px; margin-right: 4px; }
.slide { width: 62px; height: 20px; display: flex; background: repeating-linear-gradient(90deg, #bbb 0 1px, transparent 1px 14px) 3px 100% / 57px 3px no-repeat; }
.slide input { appearance: none; width: 100%; height: 13px; margin: 0; background: linear-gradient(#e7eaea, #e7eaea) 0 2px / 100% 8px no-repeat; }
.slide input::-webkit-slider-runnable-track { height: 9px; border: 1px solid #fff; border-top-color: #aaa; border-left-color: #aaa; }
.slide input::-webkit-slider-thumb { appearance: none; width: 7px; height: 12px; margin-top: -1px; background: #f4f4f4; border: 1px solid #777; border-radius: 1px 1px 3px 3px; }
.slide.long { flex: 1; margin: 0 14px 0 11px; background: repeating-linear-gradient(90deg, #bbb 0 1px, transparent 1px 76px) 3px 100% / 100% 3px no-repeat; }
.press { border: 1px solid #555; border-radius: 3px; background: #dcdcdc; box-shadow: inset 1px 1px 2px #888; height: 20px; }
.dd { width: 13px; height: 20px; border: 1px solid #777; border-radius: 3px; background: linear-gradient(#f4f4f4 50%, #d8d8d8 50%); display: grid; place-items: center; margin-left: 1px; flex: none; }
.dd::after { width: 6px; height: 3px; }
.dd.off { border-color: #bbb; } .dd.off::after { background: #999; }
.dd.go::after { width: 4px; height: 6px; clip-path: polygon(0 0, 100% 50%, 0 100%); }
.vsep { width: 1px; height: 18px; background: #999; margin: 0 3px 0 4px; flex: none; }
.map-bar .combo { margin-left: -3px; } .map-bar .adr { margin-left: 8px; width: 43px; }
.screen { border: 1px solid #fff; border-left: 2px solid #696969; border-top: 1px solid #696969; background: #000; }
.screen svg { display: block; width: 100%; }
.map { height: 121px; }
.map text { font: 11px "Noto Sans", sans-serif; fill: #444; paint-order: stroke; stroke: #fffef6; stroke-opacity: .7; stroke-width: 1px; }
.map .big { font-size: 14px; } .map .mid { font-size: 15px; } .map .dim { fill: #b0ac9c; font-style: italic; font-size: 10px; } .map .m { fill: #fff; font-size: 9px; stroke: none; }
.map .hud text { font: bold 11px "DejaVu Sans Condensed", sans-serif; fill: #000; stroke: none; }
.map .hud.w text { fill: #fff; }
.split-h { height: 5px; background: #fff; border: solid #a0a0a0; border-width: 1px 0; }
.fuel { height: 21px; display: flex; align-items: center; gap: 4px; padding-bottom: 2px; color: #0f0; }
.fuel + .split-h { height: 6px; }
.gauge { width: 99px; height: 12px; border: 1px solid #0f0; padding: 1px; display: flex; gap: 1px; }
.gauge i { width: 11px; background: #ff0; } .gauge .gr { background: #f00; } .gauge .gg { width: 7px; background: #0f0; }
.chart { height: 737px; }
.chart text { font: 11px "DejaVu Sans Condensed", sans-serif; }
.player > div { display: flex; align-items: center; height: 24px; margin-left: -1px; }
.player { padding: 3px 0 0; }
.speed { width: 49px; border-color: #3c7fb1 #b5cfe7 #b5cfe7; margin-right: -1px; }

.mark { position: absolute; left: 122px; top: 480px; font: 111px/140px Lato, sans-serif; color: #ffdc00; opacity: .41; white-space: nowrap; pointer-events: none; }
.note { position: absolute; left: 449px; top: 605px; margin: 0; font: 25px/36px "Open Sans", sans-serif; color: #fff; white-space: nowrap; pointer-events: none; }

footer { height: 20px; display: flex; background: #f1edec; border-top: 1px solid #fff; line-height: 20px; }
footer span { border-right: 1px solid #d5d3d2; width: 40px; }
footer span:first-child { width: 103px; padding-left: 5px; }
footer span:nth-child(2) { flex: 1; }
footer span:last-child { width: 82px; border: 0; background: radial-gradient(circle, #b4b4b4 1px, transparent 1px) 100% 100% / 4px 4px no-repeat; }
```
FILE: app.js
```js
// Glyphs of the round toolbar buttons, drawn on a 16 x 16 disc.
const S = (d, w = 1.5) => `<path d="${d}" fill="none" stroke="#fff" stroke-width="${w}"/>`;
const F = d => `<path d="${d}" fill="#fff"/>`;
const glyphs = {
  find: F('M4 3h3v3h2V3h3l1 9H9V9H7v3H3z'),
  cols: S('M3.500 5h3v6h-3zM9.500 5h3v6h-3zM8 3v10', 1.2),
  eject: F('M8 3l5 5H3zM3 10h10v2H3z'),
  left: S('M8 4L4.500 8 8 12M12 4L8.500 8l3.500 4'),
  earth: F('M3 3q5 7 11 7-5 3-9 0Q2 7 3 3zM6 1q3 5 8 6-1-4-4-6z'),
  fit: S('M4.500 3.500h7v3h-7zM4.500 9.500h7v3h-7zM2 8h12', 1.2),
  page: F('M4 3h8v10H4z') + '<path d="M5.500 5.500h5M5.500 7.500h5M5.500 9.500h5M5.500 11.500h5" stroke="#3c9cff"/>',
  move: F('M8 2l2.500 3h-5zM8 14l2.500-3h-5zM2 8l3-2.500v5zM14 8l-3-2.500v5z'),
  x: S('M4.500 4.500l7 7M11.500 4.500l-7 7'),
  grid: S('M6 3v10M10 3v10M3 6h10M3 10h10', 1.3),
  cube: F('M3 6l5-3 5 2-4 3zM3 7l5 2v4l-5-2zM10 9l3-3v5l-3 2z'),
  first: F('M4 4h2v8H4zM12 4v8L6 8z'),
  rew: F('M8 4v8L3 8zM13 4v8L8 8z'),
  play: F('M5 4l7 4-7 4z'),
  ff: F('M3 4l5 4-5 4zM8 4l5 4-5 4z'),
  end: F('M4 4l6 4-6 4zM10 4h2v8h-2z'),
  zz: '<g fill="none" stroke="#fff" stroke-width="1.500"><rect x="3.500" y="4.500" width="3.500" height="7" rx="1.500"/><rect x="9" y="4.500" width="3.500" height="7" rx="1.500"/></g>',
  zero: '<rect x="6.500" y="4.500" width="3" height="7" rx="1.500" fill="none" stroke="#fff" stroke-width="1.500"/>' + F('M2 5l3 3-3 3zM14 5l-3 3 3 3z'),
  plane: F('M13 3l-2 8-3-2-4 4 3-5-4-2z'),
  aim: S('M8 2v5M8 9v5M2 8h5M9 8h5M4 8a4 4 0 1 0 8 0 4 4 0 1 0-8 0', 1.2),
  pump: F('M5 3l5-1 4 5-4 2-1-2-5 6-2-1 5-6z'),
  track: S('M7 3l1 3 5 1-3 2-1 4-2-3-4-1 3-2z', 1.2),
  tank: F('M4 4l2-1h6v10H4z') + '<path d="M6 5.500l4 6M10 5.500l-4 6" stroke="#3c9cff"/>',
  zout: S('M3.500 7a3.500 3.500 0 1 0 7 0 3.500 3.500 0 1 0-7 0M10 10l3 3M5.500 7h3'),
  zin: S('M3.500 7a3.500 3.500 0 1 0 7 0 3.500 3.500 0 1 0-7 0M10 10l3 3M5.500 7h3M7 5.500v3'),
  bus: F('M4 4h8l1 3H3zM3 8h10v3H3zM4 11h2v2H4zM10 11h2v2h-2z'),
  out: S('M4 4h8v8H4zM6 10l4-4M7 6h3v3', 1.2),
};
document.querySelectorAll('[data-i]').forEach(b => {
  const disc = b.dataset.i === 'cube' ? '#777' : 'url(#blue)';
  b.innerHTML = `<svg viewBox="0 0 16 16"><circle cx="8" cy="8" r="7.800" fill="${disc}"/>${glyphs[b.dataset.i]}</svg>`;
});

// Trip rows: the trip itself and the totals.
const ln = (...p) => `<div class="ln">${p.map(t => `<span>${t}</span>`).join('')}</div>`;
const ant = '<svg><use href="#antenna"/></svg>';
const sat = '<svg viewBox="0 0 14 14"><path d="M1 2l6-2 4 4-3 5-5-2z" fill="#7fb4e4" stroke="#3c78b4"/><path d="M5 10q6 4 8 0-1-3-4-2" fill="#b4d8f4" stroke="#5c94c8"/></svg>';
const cells = [
  ln('1.12.16 &nbsp;- 16:51 &nbsp;чт') + ln('30.01.17 &nbsp;- 17:59 &nbsp;пн'),
  ln('60 сут 01:08 мин') + ln('дв.:', '2:21 мин'),
  ln('3,2') + ln('ср.:', '0,1'),
  ln('0,3') + ln('&nbsp;'),
  ln('1:', '1 441,1') + ln('2:', '1 441,1'),
  ln('1 438,8') + ln('1 438,8'),
  ln('~50 170,1') + ln('~50 170,1'),
  '',
].map(c => `<td>${c}</td>`).join('');
document.querySelector('.trip-table tbody').innerHTML =
  `<tr><td>${ln(sat, '<b>1</b>')}${ln(ant)}</td>${cells}</tr>` +
  `<tr class="sum"><td>${ln('<b>Итого:</b>')}${ln(ant)}</td>${cells}</tr>`;

// Tank events: date (empty when same as above), start, end, volume.
const events = `1.12.16|17:50|17:57|-600,0
2.12.16|09:47|09:57|-73,0
|11:30|11:33|-200,6
|13:25|13:26|-79,7
|15:24|15:32|-491,5
|16:09|16:14|-408,4
3.12.16|10:32|10:40|-509,8
|10:56|11:00|-340,8
4.12.16|09:48|10:06|-1 049,2
|11:55|12:01|-501,4
|14:26|14:44|7 583,0
5.12.16|09:05|09:31|-617,0
|10:29|10:35|-597,4
|14:00|14:01|-68,3
|15:53|16:02|-505,7
6.12.16|10:45|10:53|-424,9
|19:40|19:44|-326,2
|20:31|20:52|-1 125,0
7.12.16|13:30|13:34|-276,5
|14:25|14:28|-289,7
|15:44|15:52|-311,5
|16:51|17:08|-408,9
|18:45|19:01|-424,5
8.12.16|09:33|09:45|-397,6
|10:15|10:29|-303,2
9.12.16|13:15|16:15|7 733,9
|16:15|16:17|-69,6
|19:49|19:56|-104,5
10.12.16|01:53|02:00|-174,1
11.12.16|02:26|03:18|58,0
|11:25|11:28|-200,5
|13:08|13:13|-388,0
12.12.16|01:19|01:23|-68,9
|04:23|06:36|80,4
13.12.16|07:16|07:32|-442,8
|09:49|10:01|-513,7
|16:57|17:00|-150,6
|20:50|21:12|-1 017,2
|23:07|23:08|-101,4
|23:39|23:44|-395,5
14.12.16|12:24|13:07|-1 371,2
|14:24|14:27|-216,7
|19:35|19:43|-208,7
15.12.16|07:06|07:13|-503,8
|11:49|12:00|-519,5
16.12.16|10:36|10:38|-88,0
|12:46|12:58|-989,5
|15:07|15:23|-521,6
|18:36|18:40|-295,1
17.12.16|15:40|15:44|-421,3`.split('\n').map(r => r.split('|'));
document.querySelector('.tank tbody').innerHTML = events.map(([d, a, b, v], i) => {
  const day = d || '<em>»</em>';
  const icon = v[0] === '-' ? 'leak' : 'fill';
  return `<tr${i === 37 ? ' class="cur"' : ''}><td><svg><use href="#${icon}"/></svg>${i + 1}</td><td>${day} - ${a}</td><td>${day} - ${b}</td><td>${v}</td></tr>`;
}).join('');
```
